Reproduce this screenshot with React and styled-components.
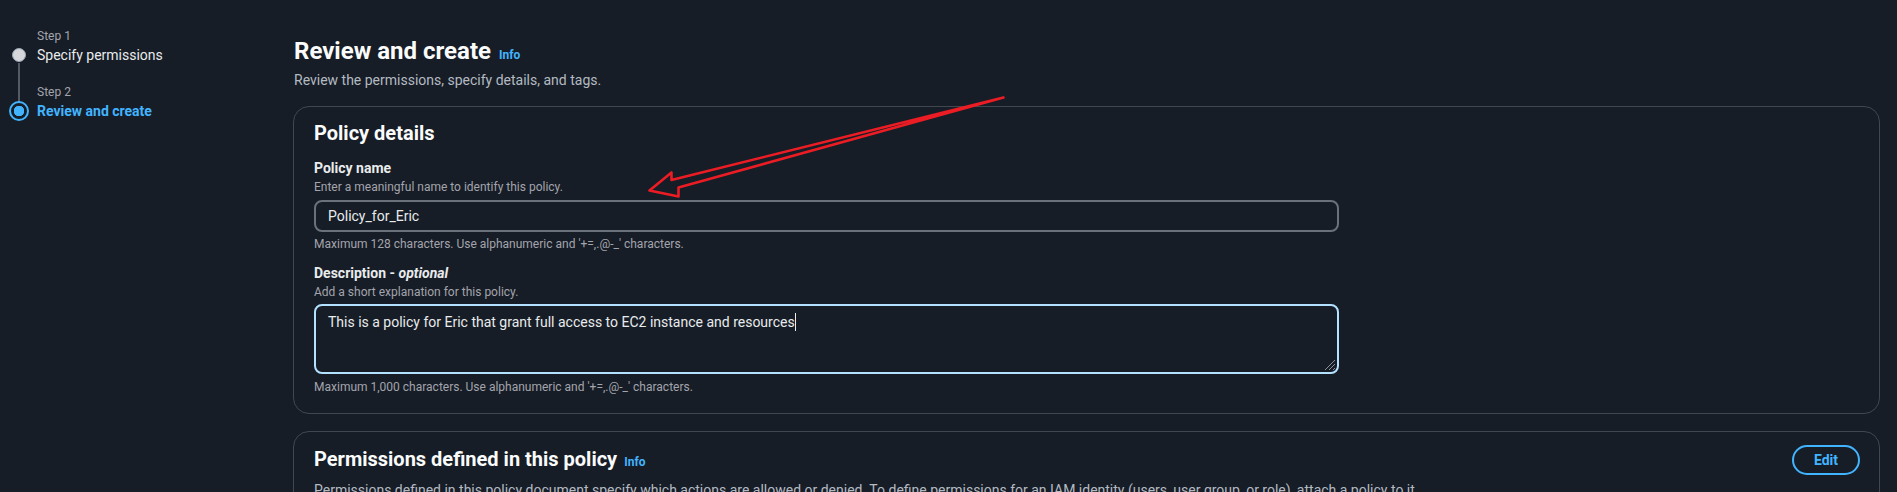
import React from "react";
import styled, { createGlobalStyle } from "styled-components";

const GlobalStyle = createGlobalStyle`
  html, body {
    margin: 0;
    padding: 0;
    background: #161d26;
    overflow: hidden;
  }
  body {
    font-family: Roboto, "Open Sans", sans-serif;
    color: #e9ebed;
  }
`;

const Page = styled.div`
  display: flex;
  min-height: 492px;
  position: relative;
`;

// Wizard navigation on the left
const Sidebar = styled.nav`
  width: 293px;
  flex-shrink: 0;
  box-sizing: border-box;
  padding: 28px 0 0 8px;
`;

const Steps = styled.ol`
  list-style: none;
  margin: 0;
  padding: 0;
  display: grid;
  grid-template-columns: 22px auto;
  column-gap: 7px;
`;

const StepLabel = styled.div`
  grid-column: 2;
  font-size: 12px;
  line-height: 16px;
  color: #a4a4ad;
  padding-top: ${({ $gap }) => $gap || "0"};
`;

const StepTitle = styled.div`
  grid-column: 2;
  font-size: 14px;
  line-height: 22px;
  font-weight: ${({ $active }) => ($active ? 700 : 400)};
  color: ${({ $active }) => ($active ? "#42b4ff" : "#e9ebed")};
`;

const Marker = styled.span`
  grid-column: 1;
  align-self: center;
  justify-self: center;
  box-sizing: border-box;
  border-radius: 50%;
  width: ${({ $active }) => ($active ? "20px" : "14px")};
  height: ${({ $active }) => ($active ? "20px" : "14px")};
  background: ${({ $active }) =>
    $active ? "radial-gradient(circle, #42b4ff 0 5px, #161d26 5.5px)" : "#d5d7db"};
  border: ${({ $active }) => ($active ? "2.5px solid #42b4ff" : "1px solid #9ba7b6")};
`;

const Connector = styled.span`
  grid-column: 1;
  justify-self: center;
  width: 2px;
  margin: -3px 0 -4px;
  background: #545b64;
`;

const Main = styled.main`
  flex: 1;
  padding: 36px 17px 0 0;
`;

const PageHeader = styled.header`
  padding-left: 1px;
  margin-bottom: 16px;
`;

const TitleRow = styled.div`
  display: flex;
  align-items: baseline;
  gap: 8px;
`;

const PageTitle = styled.h1`
  margin: 0;
  font-size: 24px;
  line-height: 30px;
  font-weight: 700;
  color: #fbfbfb;
`;

const InfoLink = styled.a`
  font-size: 12px;
  font-weight: 700;
  color: #42b4ff;
  text-decoration: none;
`;

const Subtitle = styled.p`
  margin: 4px 0 0;
  font-size: 14px;
  line-height: 20px;
  color: #b4bac2;
`;

const Card = styled.section`
  border: 1.5px solid #424650;
  border-radius: 16px;
  padding: ${({ $pad }) => $pad || "14px 20px 18px"};
  margin-bottom: 17px;
`;

const CardHeader = styled.div`
  display: flex;
  justify-content: space-between;
  align-items: center;
`;

const CardTitle = styled.h2`
  margin: 0;
  font-size: 20px;
  line-height: 24px;
  font-weight: 700;
  color: #fbfbfb;
  display: flex;
  align-items: baseline;
  gap: 7px;
`;

const CardText = styled.p`
  margin: 5px 0 0;
  font-size: 14px;
  line-height: 20px;
  color: #b4bac2;
`;

const Field = styled.div`
  margin-top: ${({ $top }) => $top || "12px"};
`;

const Label = styled.label`
  display: block;
  font-size: 14px;
  line-height: 18px;
  font-weight: 700;
  color: #e9ebed;

  em {
    font-style: italic;
  }
`;

const Hint = styled.div`
  font-size: 12px;
  line-height: 16px;
  color: #a4a4ad;
  margin: ${({ $m }) => $m || "2px 0 0"};
`;

const TextInput = styled.div`
  width: 1025px;
  box-sizing: border-box;
  height: 32px;
  margin-top: 5px;
  padding: 0 12px;
  border: 2px solid #6a717b;
  border-radius: 8px;
  display: flex;
  align-items: center;
  font-size: 14px;
  color: #e9ebed;
`;

const TextArea = styled.div`
  position: relative;
  width: 1025px;
  box-sizing: border-box;
  height: 70px;
  margin-top: 4px;
  padding: 6px 12px;
  border: 2px solid #b3e1ff;
  border-radius: 8px;
  font-size: 14px;
  line-height: 20px;
  color: #e9ebed;
`;

const Caret = styled.span`
  display: inline-block;
  width: 1px;
  height: 18px;
  vertical-align: -4px;
  background: #e9ebed;
`;

const Grip = styled.svg`
  position: absolute;
  right: 1px;
  bottom: 1px;
`;

const EditButton = styled.button`
  width: 68px;
  height: 30px;
  border: 2px solid #42b4ff;
  border-radius: 20px;
  background: transparent;
  color: #42b4ff;
  font-family: inherit;
  font-size: 14px;
  font-weight: 700;
`;

const Annotation = styled.svg`
  position: absolute;
  left: 640px;
  top: 88px;
  pointer-events: none;
`;

export default function App() {
  return (
    <>
      <GlobalStyle />
      <Page>
        <Sidebar>
          <Steps>
            <StepLabel>Step 1</StepLabel>
            <Marker />
            <StepTitle>Specify permissions</StepTitle>
            <Connector />
            <StepLabel $gap="18px">Step 2</StepLabel>
            <Marker $active />
            <StepTitle $active>Review and create</StepTitle>
          </Steps>
        </Sidebar>

        <Main>
          <PageHeader>
            <TitleRow>
              <PageTitle>Review and create</PageTitle>
              <InfoLink href="#">Info</InfoLink>
            </TitleRow>
            <Subtitle>Review the permissions, specify details, and tags.</Subtitle>
          </PageHeader>

          <Card>
            <CardTitle>Policy details</CardTitle>

            <Field $top="14px">
              <Label>Policy name</Label>
              <Hint>Enter a meaningful name to identify this policy.</Hint>
              <TextInput>Policy_for_Eric</TextInput>
              <Hint $m="4px 0 0">
                Maximum 128 characters. Use alphanumeric and '+=,.@-_' characters.
              </Hint>
            </Field>

            <Field $top="12px">
              <Label>
                Description - <em>optional</em>
              </Label>
              <Hint>Add a short explanation for this policy.</Hint>
              <TextArea>
                This is a policy for Eric that grant full access to EC2 instance and resources
                <Caret />
                <Grip width="14" height="14" viewBox="0 0 14 14">
                  <path d="M13 3 L3 13 M13 7 L7 13 M13 11 L11 13" stroke="#8a8f96" strokeWidth="1" />
                </Grip>
              </TextArea>
              <Hint $m="5px 0 0">
                Maximum 1,000 characters. Use alphanumeric and '+=,.@-_' characters.
              </Hint>
            </Field>
          </Card>

          <Card $pad="13px 19px 20px 20px">
            <CardHeader>
              <CardTitle>
                Permissions defined in this policy
                <InfoLink href="#">Info</InfoLink>
              </CardTitle>
              <EditButton>Edit</EditButton>
            </CardHeader>
            <CardText>
              Permissions defined in this policy document specify which actions are allowed or denied. To
              define permissions for an IAM identity (users, user group, or role), attach a policy to it.
            </CardText>
          </Card>
        </Main>

        <Annotation width="380" height="120" viewBox="640 88 380 120">
          <path
            d="M649.5 190.5 L671.5 172.5 L671.5 180 L1003.5 97.5 L678.5 187.5 L678.5 196.5 Z"
            fill="none"
            stroke="#ec1c24"
            strokeWidth="2.6"
            strokeLinejoin="round"
          />
        </Annotation>
      </Page>
    </>
  );
}
